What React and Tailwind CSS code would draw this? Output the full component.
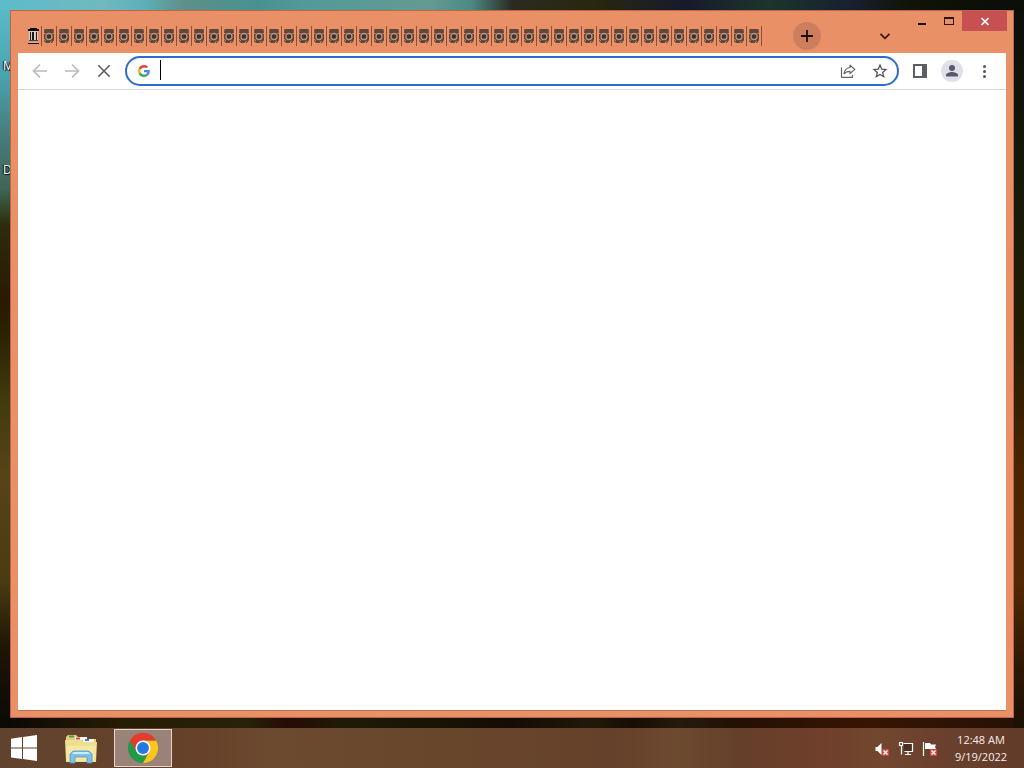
import React from "react";

const pages = Array.from({ length: 48 }, (_, i) => i + 1);

function MuseumIcon() {
  return (
    <svg className="h-4 w-3 shrink-0" viewBox="0 0 12 16" aria-hidden="true" shapeRendering="crispEdges">
      <path d="M2 3h9v10H2z" fill="#d3cdcb" />
      <path d="M3 0h7v1H3zM1 1h11v2H1zM1 15h11v1H1z" fill="#120d0c" />
      <path d="M1 14h11v1H1z" fill="#c9b4aa" />
      <path d="M3 4h1v8H3zM5 4h2v8H5zM9 4h1v8H9z" fill="#1d1817" />
      <path d="M2 12h9v1H2z" fill="#4a4341" />
    </svg>
  );
}

function TabIcon() {
  return (
    <svg className="h-4 w-3 shrink-0" viewBox="0 0 12 16" aria-hidden="true">
      <path d="M1.500 1h9l.5 4v7L9 15H3L1 13V5z" fill="#5f4637" />
      <path d="M1 5.500h1.500M9.500 5.500H11M1 11.500l2 1M7 15l1.500-2" stroke="#e08f69" strokeWidth="1" />
      <circle cx="6" cy="8.500" r="3" fill="#3f3036" stroke="#b99482" strokeWidth="1.300" />
    </svg>
  );
}

function ToolButton({ label, className = "", children }) {
  return (
    <button
      type="button"
      aria-label={label}
      className={"flex size-7 shrink-0 items-center justify-center rounded-full " + className}
    >
      {children}
    </button>
  );
}

function GoogleIcon() {
  return (
    <svg className="size-3 shrink-0" viewBox="0 0 48 48" aria-hidden="true">
      <path fill="#EA4335" d="M24 9.5c3.54 0 6.71 1.22 9.21 3.6l6.85-6.85C35.9 2.38 30.47 0 24 0 14.62 0 6.51 5.38 2.56 13.22l7.98 6.19C12.43 13.72 17.74 9.5 24 9.5z" />
      <path fill="#4285F4" d="M46.98 24.55c0-1.57-.15-3.09-.38-4.55H24v9.02h12.94c-.58 2.96-2.26 5.48-4.78 7.18l7.73 6c4.51-4.18 7.09-10.36 7.09-17.65z" />
      <path fill="#FBBC05" d="M10.53 28.59c-.48-1.45-.76-2.99-.76-4.59s.27-3.14.76-4.59l-7.98-6.19C.92 16.46 0 20.12 0 24s.92 7.54 2.56 10.78l7.97-6.19z" />
      <path fill="#34A853" d="M24 48c6.48 0 11.93-2.13 15.89-5.81l-7.73-6c-2.15 1.45-4.92 2.3-8.16 2.3-6.26 0-11.57-4.22-13.47-9.91l-7.98 6.19C6.51 42.62 14.62 48 24 48z" />
    </svg>
  );
}

function TitleBar() {
  return (
    <header className="flex h-[42px]">
      <nav aria-label="Tabs" className="mt-[15px] ml-[9px] flex h-5 min-w-0 overflow-hidden">
        <button type="button" aria-label="Library" className="flex w-[15px] shrink-0 items-center border-r border-[#8f4f38]">
          <MuseumIcon />
        </button>
        {pages.map((n) => (
          <button
            key={n}
            type="button"
            aria-label={`Tab ${n}`}
            className="flex w-[15px] shrink-0 items-center justify-center border-r border-[#8f4f38]"
          >
            <TabIcon />
          </button>
        ))}
      </nav>
      <button
        type="button"
        aria-label="New tab"
        className="mt-[11px] ml-[31px] flex size-7 shrink-0 items-center justify-center rounded-full bg-[#cd7f5d]"
      >
        <svg className="size-3.5" viewBox="0 0 14 14" aria-hidden="true">
          <path d="M7 1v12M1 7h12" stroke="#1c0f0a" strokeWidth="1.8" />
        </svg>
      </button>
      <div className="flex-1" />
      <button type="button" aria-label="Search tabs" className="mt-[11px] mr-2 flex size-7 shrink-0 items-center justify-center">
        <svg className="size-3" viewBox="0 0 12 12" aria-hidden="true">
          <path d="M1.5 3.8L6 8.3l4.5-4.5" fill="none" stroke="#33190f" strokeWidth="1.8" />
        </svg>
      </button>
      <div className="-mr-px flex h-5 shrink-0">
        <button type="button" aria-label="Minimize" className="flex w-[27px] items-center justify-center">
          <svg className="h-3 w-3" viewBox="0 0 12 12" aria-hidden="true">
            <path d="M3 8h8v2H3z" fill="#1d0f0a" />
          </svg>
        </button>
        <button type="button" aria-label="Maximize" className="flex w-7 items-center justify-center">
          <svg className="h-3 w-3" viewBox="0 0 12 12" aria-hidden="true">
            <path fillRule="evenodd" d="M2 2h10v8H2zM3 4v5h8V4z" fill="#2b160d" />
          </svg>
        </button>
        <button type="button" aria-label="Close" className="flex w-[45px] items-center justify-center bg-[#c75050]">
          <svg className="size-3" viewBox="0 0 12 12" aria-hidden="true">
            <path d="M2.5 3l7 7M9.5 3l-7 7" stroke="#fff" strokeWidth="1.7" />
          </svg>
        </button>
      </div>
    </header>
  );
}

function Toolbar() {
  return (
    <div className="flex h-[37px] items-center gap-1 border-b border-[#d9d9d9] px-2">
      <ToolButton label="Back">
        <svg className="size-4" viewBox="0 0 16 16" fill="none" stroke="#b9bbbd" strokeWidth="1.7" aria-hidden="true">
          <path d="M15 8H2M8 1.5L1.5 8 8 14.5" />
        </svg>
      </ToolButton>
      <ToolButton label="Forward">
        <svg className="size-4" viewBox="0 0 16 16" fill="none" stroke="#b9bbbd" strokeWidth="1.7" aria-hidden="true">
          <path d="M1 8h13M8 1.5L14.5 8 8 14.5" />
        </svg>
      </ToolButton>
      <ToolButton label="Stop loading">
        <svg className="size-4" viewBox="0 0 16 16" fill="none" stroke="#5c5f63" strokeWidth="1.6" aria-hidden="true">
          <path d="M2.3 2.3l11.4 11.4M13.7 2.3L2.3 13.7" />
        </svg>
      </ToolButton>
      <div className="mx-[3px] flex h-[30px] min-w-0 flex-1 items-center gap-1 rounded-full border-2 border-[#2d6cc9] pr-[3px] pl-[11px]">
        <GoogleIcon />
        <span className="-mt-0.5 ml-1.5 h-5 w-px shrink-0 bg-black" aria-hidden="true" />
        <input
          type="text"
          aria-label="Address and search bar"
          className="h-full min-w-0 flex-1 bg-transparent font-['Open_Sans',sans-serif] text-sm outline-none"
        />
        <ToolButton label="Share this page">
          <svg className="size-4" viewBox="0 0 16 16" fill="none" stroke="#5f6368" strokeWidth="1.2" strokeLinejoin="round" aria-hidden="true">
            <path d="M1.5 4.5v9.8h11v-2.3" />
            <path d="M10 2.2l4.8 4.2L10 10.6V8.3c-2.7 0-4.6.8-6 2.6.4-3.3 2.4-5.9 6-6.4z" />
          </svg>
        </ToolButton>
        <ToolButton label="Bookmark this tab">
          <svg className="size-4" viewBox="0 0 16 16" fill="none" stroke="#54575b" strokeWidth="1.3" aria-hidden="true">
            <path d="M8 2.1l1.7 4 4.3.4-3.3 2.9 1 4.2L8 11.4l-3.7 2.2 1-4.2L2 6.5l4.3-.4z" />
          </svg>
        </ToolButton>
      </div>
      <ToolButton label="Side panel">
        <svg className="size-4" viewBox="0 0 16 16" aria-hidden="true">
          <path fillRule="evenodd" d="M1 1h14v14H1zM3 3v10h7V3z" fill="#5b5e63" />
        </svg>
      </ToolButton>
      <ToolButton label="Profile">
        <svg className="size-[22px]" viewBox="0 0 22 22" aria-hidden="true">
          <circle cx="11" cy="11" r="11" fill="#dfe1e8" />
          <circle cx="11" cy="8" r="3" fill="#55596a" />
          <path d="M5 16.5v-1.5c0-2 4-3 6-3s6 1 6 3v1.5z" fill="#55596a" />
        </svg>
      </ToolButton>
      <ToolButton label="Menu">
        <svg className="size-4" viewBox="0 0 16 16" fill="#55585c" aria-hidden="true">
          <circle cx="8.5" cy="3.5" r="1.5" />
          <circle cx="8.5" cy="8.5" r="1.5" />
          <circle cx="8.5" cy="13.5" r="1.5" />
        </svg>
      </ToolButton>
    </div>
  );
}

function WindowsLogo() {
  return (
    <svg className="h-[26px] w-[26px]" viewBox="0 0 26 26" fill="#fff" aria-hidden="true">
      <path d="M0 3.7L11 2v10.5H0zM12 1.9L26 0v12.5H12zM0 13.5h11V24L0 22.4zM12 13.5h14V26l-14-1.9z" />
    </svg>
  );
}

function FolderIcon() {
  return (
    <svg className="h-[30px] w-8" viewBox="0 0 32 30" aria-hidden="true">
      <path d="M1 3l2-2h8l2 2h8l1 2h9v22H1z" fill="#e6cf7c" />
      <path d="M4 1.5h5v2H4z" fill="#4d9b4d" />
      <path d="M10 3h12v3H10z" fill="#f8f5e5" />
      <path d="M11 3.5h4v2h-4z" fill="#c65540" />
      <path d="M18 5h11v3H18z" fill="#f4f4ee" />
      <path d="M20 5h4v2h-4z" fill="#3c83c4" />
      <path d="M0 6h16l2 2h14l-1 20H1z" fill="#f0de90" />
      <path d="M1 12h30l-1 15H2z" fill="#f5e7a4" />
      <path d="M5 29V20l3-3h16l3 3v9h-5v-6H10v6z" fill="#7fc0e6" stroke="#4f9bcd" strokeWidth=".8" />
      <path d="M7 20l2-2h14l2 2z" fill="#cdebf7" />
    </svg>
  );
}

function ChromeLogo() {
  return (
    <svg className="size-[30px]" viewBox="0 0 48 48" aria-hidden="true">
      <path d="M3.2 12L13.6 30 24 36h10.4L24 48A24 24 0 0 1 3.2 12z" fill="#229a48" />
      <path d="M24 12h20.8A24 24 0 0 1 24 48l10.4-18z" fill="#fbc51c" />
      <path d="M3.2 12L13.6 30 24 12h20.8a24 24 0 0 0-41.6 0z" fill="#e33b2e" />
      <circle cx="24" cy="24" r="12" fill="#fff" />
      <circle cx="24" cy="24" r="9.5" fill="#2578e4" />
    </svg>
  );
}

function TrayIcon({ label, children }) {
  return (
    <button type="button" aria-label={label} className="flex h-10 w-6 items-center justify-center">
      <svg className="size-4" viewBox="0 0 16 16" aria-hidden="true">
        {children}
      </svg>
    </button>
  );
}

function ErrorBadge() {
  return (
    <>
      <path d="M8 8h7v7H8z" fill="#cf4545" />
      <path d="M9.5 9.5l4 4M13.5 9.5l-4 4" stroke="#fff" strokeWidth="1.4" />
    </>
  );
}

function Taskbar() {
  return (
    <footer className="flex h-10 shrink-0 items-center bg-[linear-gradient(to_right,#60432f_0%,#674129_20%,#6b4a30_26%,#68462c_45%,#65402a_60%,#6c4a30_66%,#653f2a_72%,#6f3f2b_80%,#72472f_86%,#6b412e_91%,#623b29_100%)]">
      <button type="button" aria-label="Start" className="flex h-10 w-12 items-center justify-center">
        <WindowsLogo />
      </button>
      <button type="button" aria-label="File Explorer" className="flex h-10 w-[66px] items-center justify-center pt-0.5">
        <FolderIcon />
      </button>
      <button
        type="button"
        aria-label="Google Chrome"
        className="flex h-[38px] w-[58px] items-center justify-center border border-[#e6d3c9] bg-[#998278]"
      >
        <ChromeLogo />
      </button>
      <div className="flex-1" />
      <div className="flex items-center pt-px">
        <TrayIcon label="Volume muted">
          <path d="M1.5 6h2l4-4v12l-4-4h-2z" fill="#fff" />
          <ErrorBadge />
        </TrayIcon>
        <TrayIcon label="Network">
          <path d="M5.5 2.5h9v8h-8" fill="#4c2f21" stroke="#fff" strokeWidth="1.2" />
          <path d="M1.5 1.5h3v3h-3zM3.5 4.5v9M7 13.5h6M10 10.5v3" fill="none" stroke="#fff" strokeWidth="1.2" />
        </TrayIcon>
        <TrayIcon label="Action Center">
          <path d="M1.5 1v14" stroke="#fff" strokeWidth="1.2" />
          <path d="M3 2h5l1 1.500h5L13 6l1 2H3z" fill="#fff" />
          <ErrorBadge />
        </TrayIcon>
      </div>
      <button
        type="button"
        className="mr-3 ml-2 w-[62px] text-center font-['Open_Sans',sans-serif] text-[11px] leading-[17px] whitespace-nowrap text-[#f7efea]"
      >
        <span className="block">12:48 AM</span>
        <span className="block">9/19/2022</span>
      </button>
    </footer>
  );
}

export default function App() {
  return (
    <div className="flex h-screen flex-col overflow-hidden bg-[#1a0f04]">
      <main className="relative flex min-h-0 flex-1 flex-col bg-[linear-gradient(to_right,#5cbccb_0%,#70b9bf_10%,#5cb0ba_14%,#5f8f88_18%,#479290_25%,#539a98_30%,#649a92_42%,#4b8a85_46%,#2a2b20_50%,#28270f_58%,#171a2c_67%,#1c352c_75%,#172030_83%,#101305_89%,#0b0d0a_100%),linear-gradient(#5cbccb_0%,#4aa5b0_10%,#477f80_18%,#3f6555_26%,#2c2c0b_31%,#2a1a02_41%,#2b2202_46%,#403b0e_55%,#574318_65%,#4a3b12_80%,#1d1505_89%,#0b0905_100%),linear-gradient(#0b0e0a_0%,#151a08_25%,#261d02_48%,#4c2403_65%,#532805_80%,#2c1704_92%,#1c0f04_100%),linear-gradient(to_right,#0a0805_0%,#271c05_12%,#25230a_24%,#280c04_28%,#1e1b05_34%,#130d06_50%,#1f1a08_58%,#180c05_62%,#251b0c_66%,#241004_72%,#381503_85%,#241104_100%)] p-[10px] [background-position:top,left,right,bottom] [background-repeat:no-repeat] [background-size:100%_10px,10px_100%,10px_100%,100%_10px]">
        <span className="absolute top-[58px] left-[3px] font-['Open_Sans',sans-serif] text-xs leading-4 text-white [text-shadow:1px_1px_1px_#000,-1px_0_1px_#000]">M</span>
        <span className="absolute top-[162px] left-[3px] font-['Open_Sans',sans-serif] text-xs leading-4 text-white [text-shadow:1px_1px_1px_#000,-1px_0_1px_#000]">D</span>
        <section
          aria-label="Browser window"
          className="relative flex min-h-0 flex-1 flex-col border border-[#b8654a] bg-[#e99067] px-[7px] pb-1.5"
        >
          <TitleBar />
          <div className="flex min-h-0 flex-1 flex-col border-b border-[#b96f51] bg-white">
            <Toolbar />
            <div className="flex-1" />
          </div>
        </section>
      </main>
      <Taskbar />
    </div>
  );
}
